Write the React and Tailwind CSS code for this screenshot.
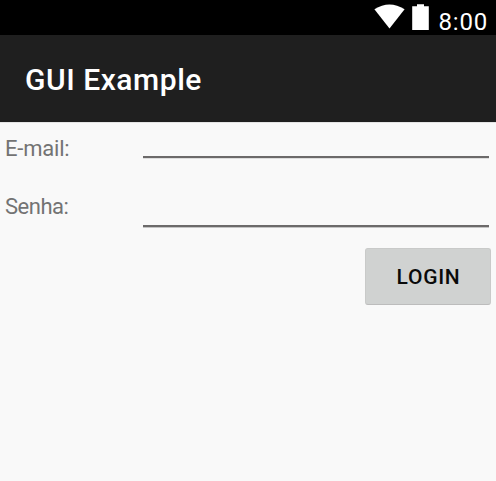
function StatusBar() {
  return (
    <div className="flex h-[35px] items-start justify-end bg-black pr-[8px] text-white">
      <svg className="mt-1 h-[25px] w-[31px]" viewBox="0 0 31 25" fill="currentColor">
        <path d="M0.4 5.2 Q15.5 -4.2 30.6 5.2 L15.5 24.6 Z" />
      </svg>
      <svg className="mt-1 ml-[7px] h-[26px] w-[17px]" viewBox="0 0 17 26" fill="currentColor">
        <path d="M0.2 2.2 H5 V0.2 H12 V2.2 H16.8 V26 H0.2 Z" />
      </svg>
      <span className="mt-[8px] ml-[10px] text-[24px] leading-[29px] tracking-[0.8px]">8:00</span>
    </div>
  );
}

function Field({ label, type, className, labelClass, lineClass }) {
  return (
    <label className={`flex items-start pr-[7px] pl-[5px] ${className}`}>
      <span className={`w-[138px] text-[22px] leading-[26px] text-[#737373] ${labelClass}`}>{label}</span>
      <input
        type={type}
        className={`min-w-0 flex-1 border-b-2 border-[#6c6a6a] bg-transparent outline-none ${lineClass}`}
      />
    </label>
  );
}

export default function App() {
  return (
    <div className="flex h-[481px] w-[496px] flex-col overflow-hidden bg-[#f9f9f9] font-[Roboto,sans-serif]">
      <StatusBar />
      <header className="flex h-[87px] items-center bg-[#1f1f1f] pt-[2px] pl-[25px]">
        <h1 className="text-[30px] leading-[36px] font-medium tracking-[0.55px] text-white">GUI Example</h1>
      </header>
      <form className="flex flex-col border-t border-[#e4e4e4]">
        <Field
          label="E-mail:"
          type="email"
          className="h-[58px] pt-[13px]"
          labelClass="tracking-[-0.2px]"
          lineClass="h-[22px] shadow-[0_1px_0_#dedede]"
        />
        <Field
          label="Senha:"
          type="password"
          className="h-[67px] pt-[13px]"
          labelClass="tracking-[-0.5px]"
          lineClass="h-[33px] shadow-[0_1px_0_#c4c4c4]"
        />
        <button
          type="button"
          className="mr-[5px] h-[57px] w-[126px] self-end rounded-[3px] border border-[#c9cac9] border-b-[#bcbcbc] bg-[#d0d2d1] pt-[2px] pl-px text-[21px] font-medium tracking-[0.7px] text-[#0a0a0a]"
        >
          LOGIN
        </button>
      </form>
    </div>
  );
}
